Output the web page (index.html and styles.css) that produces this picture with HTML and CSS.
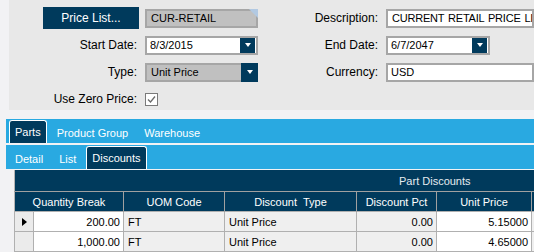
FILE: index.html
```html
<!DOCTYPE html>
<html>
    <head>
        <link rel="stylesheet" href="styles.css">
    </head>
 <body>
    <div class="panel">
        <div class="cell"><button class="btn">Price List...</button></div>
        <div class="field ro">CUR-RETAIL<span class="corner"></span></div>
        <span class="lbl">Description:</span>
        <div class="field wide spaced">CURRENT RETAIL PRICE LIST</div>

        <span class="lbl">Start Date:</span>
        <div class="field date"><span class="val">8/3/2015</span><span class="drop"></span></div>
        <span class="lbl">End Date:</span>
        <div class="field date end"><span class="val">6/7/2047</span><span class="drop"></span></div>

        <span class="lbl">Type:</span>
        <div class="field ro combo"><span class="val">Unit Price</span><span class="drop"></span></div>
        <span class="lbl">Currency:</span>
        <div class="field wide">USD</div>

        <span class="lbl">Use Zero Price:</span>
        <div class="cell">
            <span class="chk">
                <svg width="11" height="11" viewBox="0 0 11 11"><polyline points="2,5.5 4.5,8 9,2.5" fill="none" stroke="#6a6a6a" stroke-width="1.3"/></svg>
            </span>
        </div>
    </div>

    <div class="tabbar main">
        <span class="tab active">Parts</span>
        <span class="tab">Product Group</span>
        <span class="tab">Warehouse</span>
    </div>
    <div class="tabbar sub">
        <span class="tab">Detail</span>
        <span class="tab">List</span>
        <span class="tab active">Discounts</span>
    </div>

    <div class="grid">
        <table class="gtable">
            <colgroup>
                <col class="c-sel"><col class="c-qty"><col class="c-uom"><col class="c-type"><col class="c-pct"><col class="c-price"><col class="c-rest">
            </colgroup>
            <thead>
                <tr class="band"><th colspan="7">Part Discounts</th></tr>
                <tr class="cols">
                    <th colspan="2">Quantity Break</th>
                    <th>UOM Code</th>
                    <th>Discount&nbsp; Type</th>
                    <th>Discount Pct</th>
                    <th>Unit Price</th>
                    <th></th>
                </tr>
            </thead>
            <tbody>
                <tr>
                    <td class="sel"><span class="cur"></span></td>
                    <td class="num edit">200.00</td>
                    <td>FT</td>
                    <td>Unit Price</td>
                    <td class="num">0.00</td>
                    <td class="num edit">5.15000</td>
                    <td></td>
                </tr>
                <tr>
                    <td class="sel"></td>
                    <td class="num edit">1,000.00</td>
                    <td>FT</td>
                    <td>Unit Price</td>
                    <td class="num">0.00</td>
                    <td class="num edit">4.65000</td>
                    <td></td>
                </tr>
            </tbody>
        </table>
    </div>
 </body>
</html>
```
FILE: styles.css
```css
body{
    margin: 0;
    width: 534px;
    height: 252px;
    overflow: hidden;
    background-color: #f2f2f4;
    font-family: "Liberation Sans", Arial, sans-serif;
    font-size: 12px;
    color: #000000;
}
.panel{
    margin-left: 9px;
    height: 110px;
    box-sizing: border-box;
    padding-top: 8px;
    background-color: #e8e8e8;
    display: grid;
    grid-template-columns: 136px 113px 128px 1fr;
    grid-template-rows: repeat(4, 20px);
    row-gap: 7px;
    align-items: center;
}
.lbl{
    text-align: right;
    padding-right: 8px;
}
.cell{
    display: flex;
    align-items: center;
}
.btn{
    align-self: start;
    margin-left: 34px;
    width: 96px;
    height: 22px;
    padding: 0;
    border: 0;
    background-color: #003a5c;
    color: #ffffff;
    font-family: "Liberation Sans", Arial, sans-serif;
    font-size: 12px;
}
.field{
    position: relative;
    height: 19px;
    box-sizing: border-box;
    border: 2px solid #a6a6a6;
    background-color: #ffffff;
    display: flex;
    align-items: center;
    padding-left: 3px;
    font-size: 11px;
}
.field.ro{
    background-color: #c0c0c0;
    padding-left: 4px;
}
.field.ro:first-of-type{
    height: 20px;
}
.field.spaced{
    padding-left: 4px;
    word-spacing: 1px;
    letter-spacing: -0.2px;
    white-space: nowrap;
    overflow: hidden;
}
.field.end{
    width: 104px;
}
.val{
    flex: 1;
}
.corner{
    position: absolute;
    top: -2px;
    right: -2px;
    border-top: 9px solid #b2c9e2;
    border-left: 9px solid transparent;
}
.drop{
    width: 15px;
    height: 15px;
    margin-right: 1px;
    background-color: #003a5c;
    display: flex;
    align-items: center;
    justify-content: center;
}
.drop::after{
    content: "";
    border-top: 4px solid #ffffff;
    border-left: 3.5px solid transparent;
    border-right: 3.5px solid transparent;
}
.combo .drop{
    width: 17px;
    height: 19px;
    margin-right: -2px;
}
.chk{
    width: 13px;
    height: 13px;
    box-sizing: border-box;
    border: 1px solid #7a7a7a;
    background-color: #ffffff;
    display: flex;
    align-items: center;
    justify-content: center;
}
.tabbar{
    margin-left: 6px;
    height: 24px;
    box-sizing: border-box;
    padding-left: 3px;
    background-color: #29a9e1;
    display: flex;
    align-items: flex-end;
    gap: 4px;
    color: #ffffff;
    font-size: 11px;
}
.tabbar.main{
    margin-top: 9px;
}
.tabbar.sub{
    margin-top: 2px;
}
.tab{
    height: 23px;
    box-sizing: border-box;
    padding: 3px 6px 0 6px;
    display: flex;
    align-items: center;
}
.tab.active{
    padding: 0 5px;
    background-color: #003a5c;
    border: 1px solid #ffffff;
    border-bottom: 0;
    border-radius: 3px 3px 0 0;
}
.grid{
    margin-top: 1px;
    margin-left: 14px;
    overflow: hidden;
}
.gtable{
    width: 840px;
    table-layout: fixed;
    border-collapse: collapse;
    border-left: 1px solid #b4b4b4;
    font-size: 11px;
}
.c-sel{ width: 19px; }
.c-qty{ width: 90px; }
.c-uom{ width: 101px; }
.c-type{ width: 132px; }
.c-pct{ width: 80px; }
.c-price{ width: 95px; }
.c-rest{ width: 323px; }
.gtable th{
    background-color: #003a5c;
    color: #ffffff;
    font-weight: normal;
    padding: 0;
}
.band th{
    height: 21px;
    color: #e4ebf0;
    border-bottom: 1px solid #a0a0a0;
}
.cols th{
    height: 19px;
    border-right: 1px solid #a0a0a0;
}
.gtable td{
    height: 19px;
    padding: 0 4px;
    background-color: #efefef;
    border: 1px solid #b0b0b0;
    white-space: nowrap;
    overflow: hidden;
}
.gtable td.num{
    text-align: right;
    padding-right: 3px;
}
.gtable td.edit{
    background-color: #ffffff;
}
.gtable td.sel{
    padding: 0;
    background-color: #ebebeb;
    text-align: center;
}
.cur{
    display: inline-block;
    border-left: 5px solid #000000;
    border-top: 4px solid transparent;
    border-bottom: 4px solid transparent;
}
```
